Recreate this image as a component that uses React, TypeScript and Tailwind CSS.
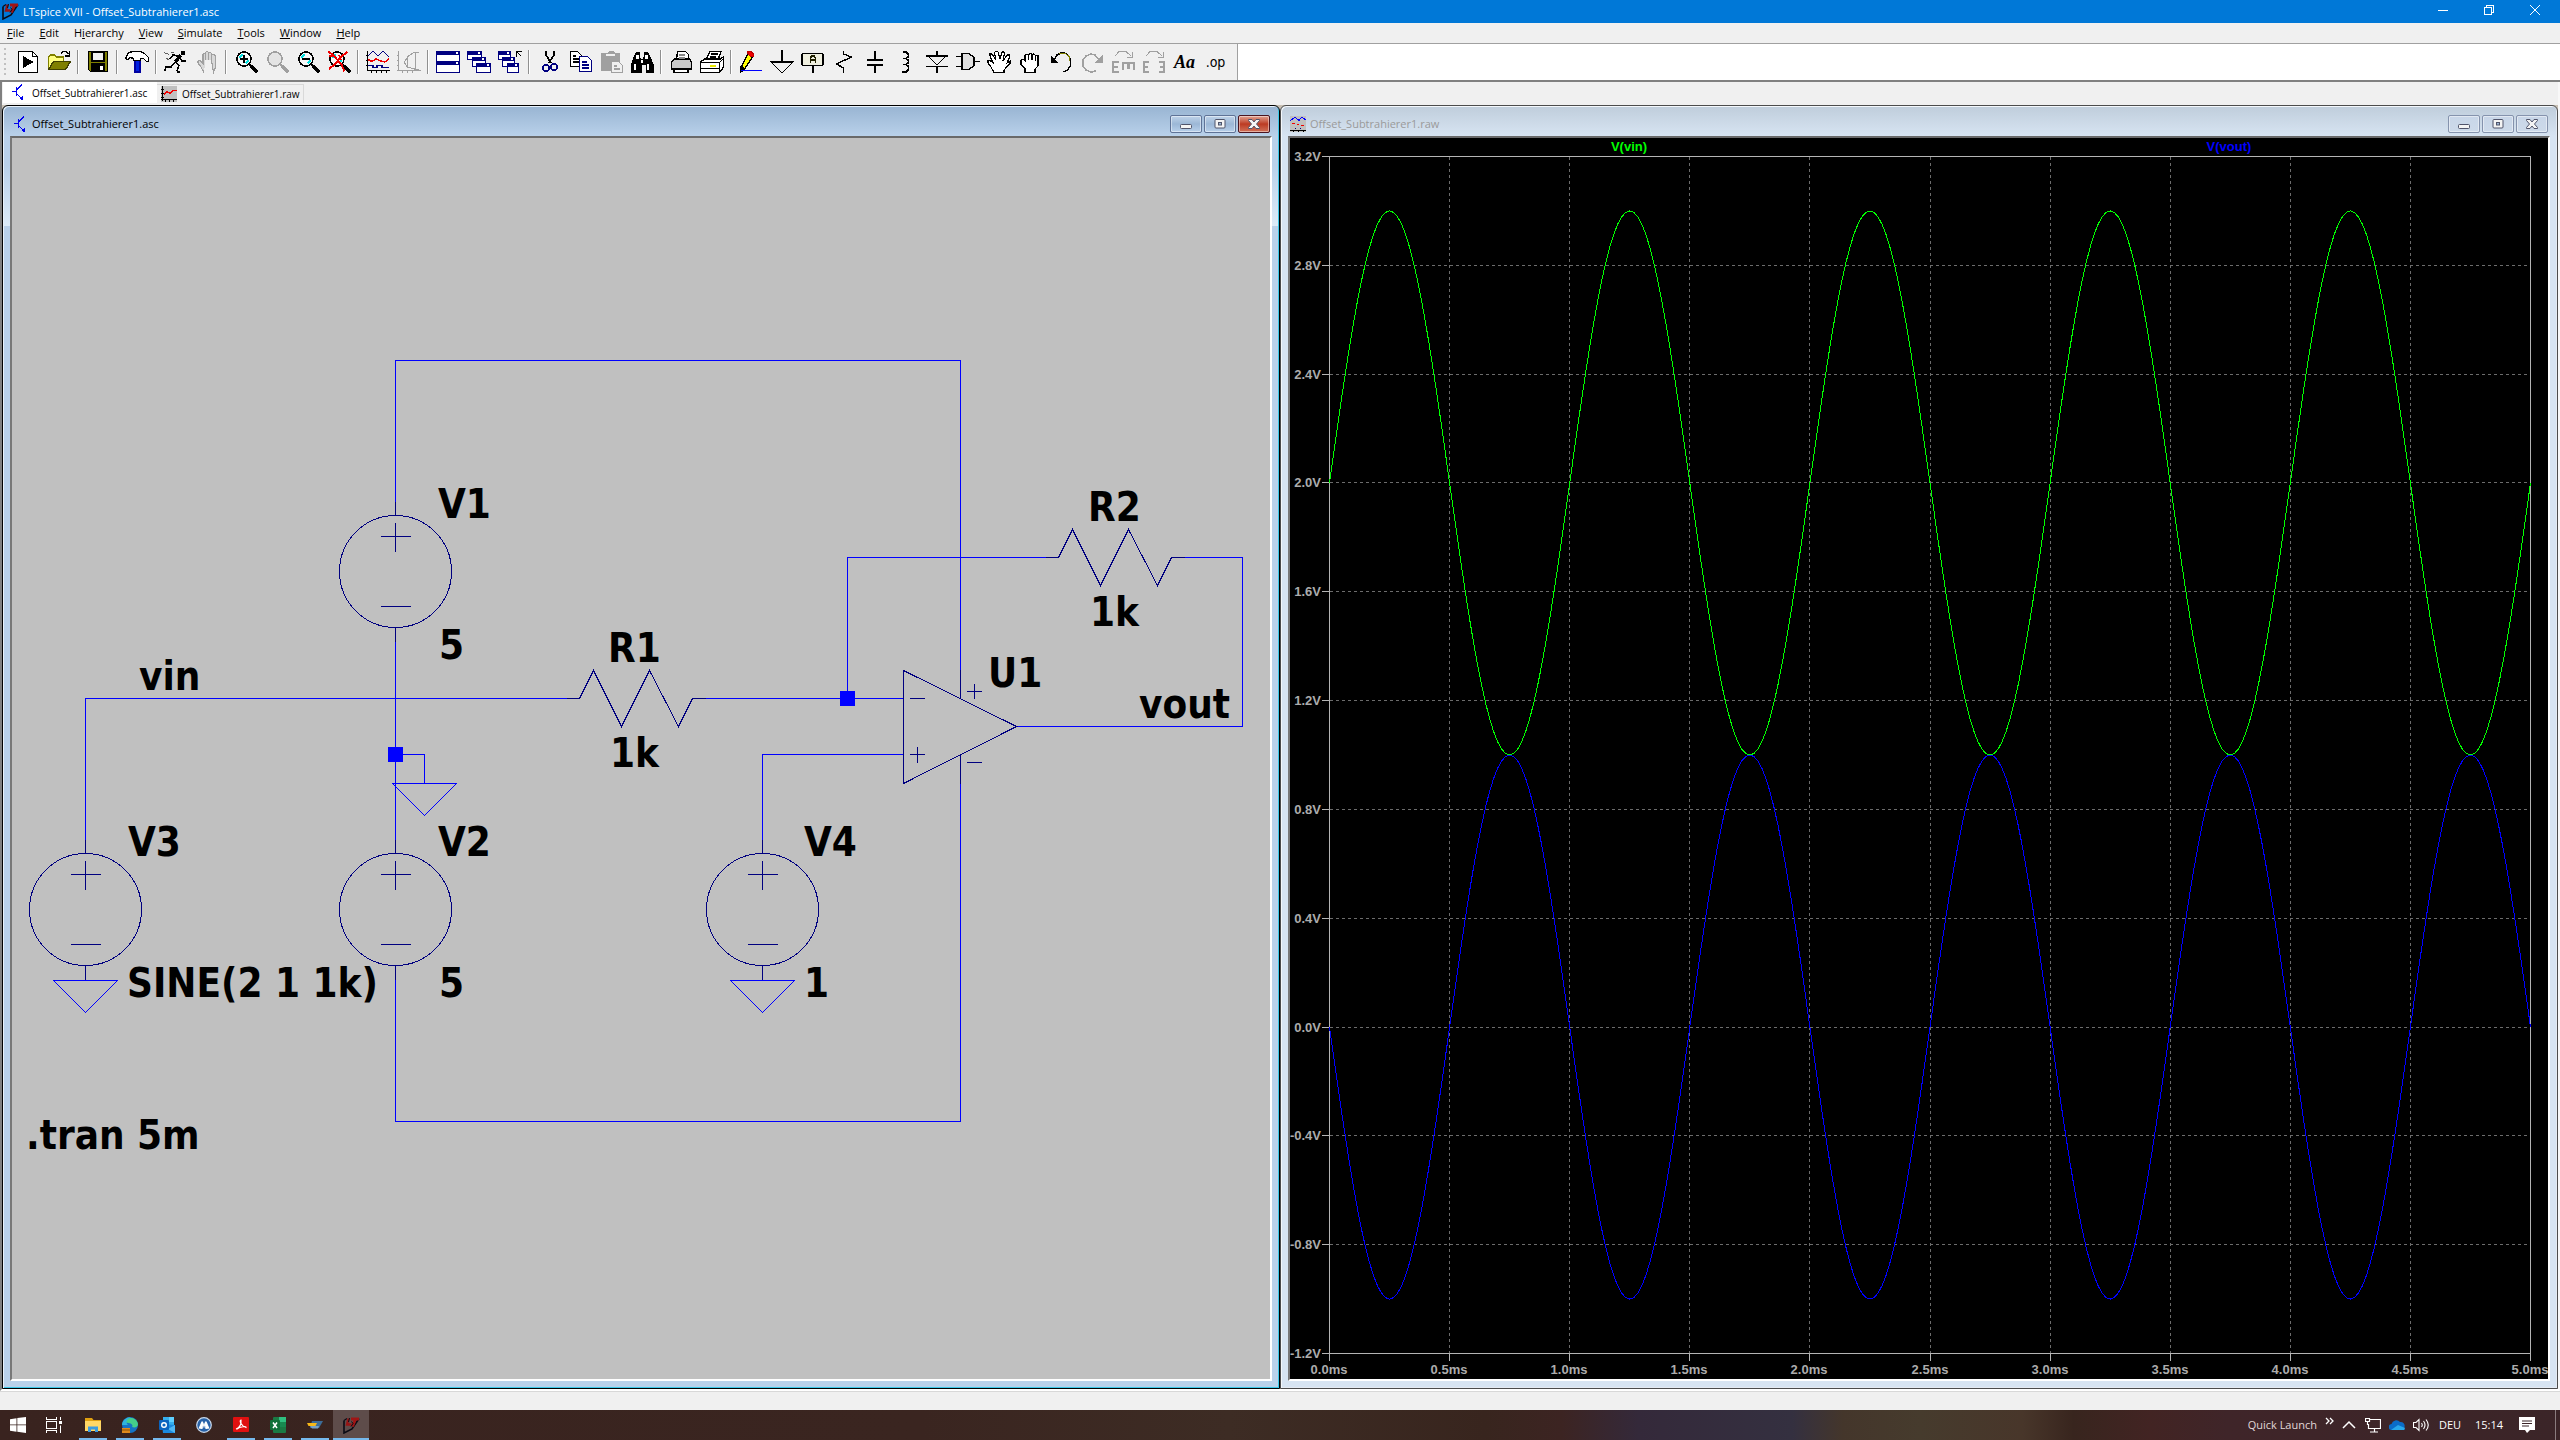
import React from "react";

type Kids = { children?: React.ReactNode };

const ui = "font-['Open_Sans','Noto_Sans',sans-serif]";

/* ---------- toolbar icons: 24 x 24, hard edged ---------- */

function Ico({ children }: Kids) {
  return (
    <svg viewBox="0 0 24 24" className="size-6 shrink-0" shapeRendering="crispEdges" fill="none" stroke="#000" strokeWidth="1.4" aria-hidden="true">
      {children}
    </svg>
  );
}

const grey = "#a0a0a0";
const navy = "#000080";

function Lens({ color = "#000", shine = true, children }: Kids & { color?: string; shine?: boolean }) {
  return (
    <Ico>
      <g transform="translate(1 0)">
        <circle cx="9" cy="9" r="7" fill={shine ? "#f8f8f8" : "#e4e4e4"} stroke={color} strokeWidth="1.6" />
        {shine && <path d="M4.500 8l3-3.500M10.500 13.500l3-3" stroke="#00e0e0" strokeWidth="2" />}
        <path d="M14 14l3 3" stroke={color} strokeWidth="2" />
        <path d="M16 16l6.500 6.500" stroke={color} strokeWidth="3.400" />
        {children}
      </g>
    </Ico>
  );
}

function MiniWin({ x, y, w, h }: { x: number; y: number; w: number; h: number }) {
  return (
    <g>
      <rect x={x + 0.5} y={y + 0.5} width={w - 1} height={h - 1} fill="#fff" stroke={navy} strokeWidth="1.2" />
      <rect x={x} y={y} width={w} height="4" fill={navy} stroke="none" />
      <rect x={x + w - 4} y={y + 1} width="2" height="2" fill="#fff" stroke="none" />
    </g>
  );
}

function TransistorIcon() {
  return (
    <svg viewBox="0 0 14 17" className="h-[17px] w-[14px] shrink-0" shapeRendering="crispEdges" fill="none" stroke="#0000f0" strokeWidth="1.4" aria-hidden="true">
      <path d="M0 7.500h4M4.500 3v9M5 5.500l5-5M5 10l5 5" />
      <path d="M11 16v-5l-4 4z" fill="#0000f0" stroke="none" />
    </svg>
  );
}

function WaveDocIcon({ blue = false }: { blue?: boolean }) {
  return (
    <svg viewBox="0 0 16 16" className="size-4 shrink-0" shapeRendering="crispEdges" fill="none" aria-hidden="true">
      <rect width="16" height="16" fill="#c0c0c0" />
      {blue ? (
        <>
          <path d="M0 4.500l2-1 3-2.500 4 3.500 3-3.500 4 3" stroke="#0000ff" strokeWidth="1" />
          <path d="M2 7.500h3M7 8.500h2M11 9.500h3" stroke="#f00000" strokeWidth="1" />
          <path d="M5 12h1M10 12h1" stroke={navy} strokeWidth="1" />
          <path d="M0 14.500h16M3.500 14v2M8.500 14v2M13.500 14v2" stroke="#000" strokeWidth="1" />
        </>
      ) : (
        <>
          <path d="M3 8.500l3-3 3 2 3-3h4" stroke="#f00000" strokeWidth="1.6" />
          <path d="M1.500 0v15M0 3.500h3M0 7.500h3M0 11.500h3M0 13.500h16M4.500 13v3M8.500 13v3M12.500 13v3" stroke="#000" strokeWidth="1.2" />
        </>
      )}
    </svg>
  );
}

function LtLogo() {
  return (
    <svg viewBox="0 0 17 17" className="size-[17px] shrink-0" fill="none" aria-hidden="true">
      <path d="M1 3.500v12.500L9 12l7-10.500" stroke="#0a0a14" strokeWidth="1.600" />
      <path d="M1 3.500l3-2" stroke="#0a0a14" strokeWidth="1.200" />
      <path d="M5.500 1.500L4 7.500h4.500" stroke="#981414" strokeWidth="2.400" />
      <path d="M8 2h8M12.500 2L9.500 9.500" stroke="#a01414" strokeWidth="2.800" />
      <path d="M8.500 4.500l1.500 2-2 3M6.500 1l-1 4" stroke="#0a0a14" strokeWidth="1" />
    </svg>
  );
}

const Hand = ({ c = "#000", f = "#fff" }: { c?: string; f?: string }) => (
  <path
    d="M9 22.500L6 17 3 13v-2l2-.5 3 3V4.500L9 3l1.500 1.500V10M10.500 10V2.500L12 1l1.500 1.500V10M13.500 10V2.500L15 2l1.500 1.500V10M16.500 10V5l1.500-1L20.500 5.500V17l-2 5.500z"
    fill={f}
    stroke={c}
    strokeWidth="1.2"
  />
);

type Tool = { label: string; icon: React.ReactNode };

const groups: Tool[][] = [
  [
    {
      label: "New Schematic",
      icon: (
        <Ico>
          <path d="M2.500 1.500h14l5 5v16h-19z" fill="#fff" />
          <path d="M16.500 1.500v5h5" />
          <path d="M7 6v12l10.500-6z" fill="#000" stroke="none" />
        </Ico>
      ),
    },
    {
      label: "Open",
      icon: (
        <Ico>
          <path d="M1.500 18.500V7l2-2h4l2 2h7v4" fill="#ffff80" stroke="#808000" />
          <path d="M1.500 19.500l5-8h17l-5 8z" fill="#808000" stroke="#404000" />
          <path d="M14 4l2-2.500h3l2.500 3M22.500 1v5h-5" />
        </Ico>
      ),
    },
  ],
  [
    {
      label: "Save",
      icon: (
        <Ico>
          <path d="M2.500 1.500h19v20h-17l-2-2z" fill="#808000" />
          <path d="M6 2h12v9H6z" fill="#f0f0f0" />
          <path d="M6 14h12v7.500H6z" fill="#000" />
          <path d="M14 16h3v4h-3z" fill="#fff" stroke="none" />
        </Ico>
      ),
    },
  ],
  [
    {
      label: "Control Panel",
      icon: (
        <Ico>
          <path d="M10 10h5v12h-5z" fill="#0020e0" stroke="#0000a0" />
          <path d="M.5 8l3-5 4-1.500h8l4 2 4 4v4h-2l-3-3h-3v2h-7v-2l-3-1-3 2z" fill="#fff" />
        </Ico>
      ),
    },
  ],
  [
    {
      label: "Run",
      icon: (
        <Ico>
          <path d="M17 1h4v3.500h-4z" fill="#000" stroke="none" />
          <path d="M16.500 5l-5 7" strokeWidth="3.400" />
          <path d="M14 6l-5-1-3 4M16 8l2 3h4M11 12l4 3.500-2 6M11 12l-4 5H2l-1.500 4M13 22h3" strokeWidth="1.600" />
          <path d="M0 2.500l5 2M2 8l3 2M7 2l3 1" stroke="#606060" strokeWidth="1" />
        </Ico>
      ),
    },
    { label: "Halt", icon: <Ico><Hand c={grey} f="#d8d8d8" /></Ico> },
  ],
  [
    { label: "Zoom In", icon: <Lens><path d="M9 5v8M5 9h8" strokeWidth="2" /></Lens> },
    { label: "Pan", icon: <Lens color={grey} shine={false} /> },
    { label: "Zoom Out", icon: <Lens><path d="M5 9h8" strokeWidth="2" /></Lens> },
    {
      label: "Zoom Full",
      icon: (
        <Lens>
          <path d="M.5 1.500l5 4 8 9 3 7M19.500 1.500l-7 6-6 7-5.500 4.500M1 6h5M11 5l2 5" stroke="#f00000" strokeWidth="2" />
        </Lens>
      ),
    },
  ],
  [
    {
      label: "Autorange",
      icon: (
        <Ico>
          <path d="M2 6l5-5 5 5 5-5 6 6" stroke={navy} />
          <path d="M2 9.500l4 2 4-2.500 5 2 4 1 4-3" stroke="#f00000" />
          <path d="M2 15.500h5v2h4v-2h5v2h7" stroke={navy} />
          <path d="M1.500 1v20M1.500 20.500H24M0 5.500h2M0 10.500h2M0 15.500h2M5.500 20v3M10.500 20v3M15.500 20v3M20.500 20v3" strokeWidth="1.2" />
        </Ico>
      ),
    },
    {
      label: "Plot Settings",
      icon: (
        <Ico>
          <path d="M21.500 2h-4L10 7v10l7.500 2h4M18 2v17M7 12l4-5M7 12l4 6M1.500 1v20M0 20.500h24M0 5.500h2M0 10.500h2M0 15.500h2M5.500 20v3M10.500 20v3M15.500 20v3" stroke={grey} strokeWidth="1" />
        </Ico>
      ),
    },
  ],
  [
    { label: "Tile", icon: <Ico><MiniWin x={0} y={1} w={24} h={11} /><MiniWin x={0} y={11} w={24} h={12} /></Ico> },
    { label: "Cascade", icon: <Ico><MiniWin x={0} y={1} w={15} h={9} /><MiniWin x={5} y={7} w={14} h={10} /><MiniWin x={9} y={13} w={15} h={10} /></Ico> },
    {
      label: "Close All",
      icon: (
        <Ico>
          <MiniWin x={0} y={1} w={13} h={9} /><MiniWin x={4} y={7} w={13} h={10} /><MiniWin x={9} y={13} w={12} h={10} />
          <path d="M18.500 7V1.500H24M18.500 1.500l5 5" />
        </Ico>
      ),
    },
  ],
  [
    {
      label: "Cut",
      icon: (
        <Ico>
          <path d="M9 1v4l5 8M17 1v4l-5 8" strokeWidth="1.6" />
          <circle cx="9" cy="18" r="3" stroke={navy} strokeWidth="1.600" />
          <circle cx="17" cy="17" r="3" stroke={navy} strokeWidth="1.600" />
        </Ico>
      ),
    },
    {
      label: "Copy",
      icon: (
        <Ico>
          <path d="M2.500 1.500h7l4 4v11h-11z" fill="#fff" />
          <path d="M5 6h3M5 9h6M5 12h6" />
          <path d="M11.500 6.500h8l4 4v11h-12z" fill="#fff" stroke={navy} />
          <path d="M14 12h5M14 15h7M14 18h7" stroke={navy} />
        </Ico>
      ),
    },
    {
      label: "Paste",
      icon: (
        <Ico>
          <path d="M2 3h6l2-2h4l2 2h5v18H2z" fill={grey} stroke="none" />
          <path d="M7 5h9" stroke="#f0f0f0" />
          <path d="M12.500 11.500h7l4 4v7h-11z" fill="#f0f0f0" stroke={grey} />
          <path d="M15 16h3M15 19h6" stroke={grey} />
        </Ico>
      ),
    },
    {
      label: "Find",
      icon: (
        <Ico>
          <path d="M4 6l2-4h4v4l1 3h2l1-3V2h4l2 4 4 9v8h-8v-8h-4v8H1v-8z" fill="#000" stroke="none" />
          <path d="M6 5h3v4H6zM15 5h3v4h-3zM4 14h2v6H4zM17 14h2v6h-2zM11 10h2v3h-2z" fill="#fff" stroke="none" />
        </Ico>
      ),
    },
  ],
  [
    {
      label: "Print Setup",
      icon: (
        <Ico>
          <path d="M7.500 10l1-8.500h8l3 3V10" fill="#fff" />
          <path d="M2.500 12l3-3h15l2 3v7h-20z" fill="#c8c8c8" />
          <path d="M5 19h14v3.500H5z" fill="#fff" />
          <path d="M10 5h6M10 8h6" stroke="#888" />
        </Ico>
      ),
    },
    {
      label: "Print",
      icon: (
        <Ico>
          <path d="M6 10l4-8.500h11L18 10" fill="#fff" />
          <path d="M.5 12l4-3h16l3-2v10l-4 5.500H.5z" fill="#fff" />
          <path d="M.5 12.500h19l4-4M.5 18.500h19M19.500 13v9M11 4h7M10 7h6" />
          <path d="M10 15.500h6" stroke="#e8e800" strokeWidth="2" />
        </Ico>
      ),
    },
  ],
  [
    {
      label: "Draw Wire",
      icon: (
        <Ico>
          <path d="M3 21V16L9 3.500h5v3L6 18.500z" fill="#ffff00" />
          <path d="M9 1.500h3l2.500 2v3h-3L9 4z" fill="#f00000" stroke="#c00000" />
          <path d="M2 22v-5l4 2z" fill="#000" />
          <path d="M2 20.500h21" stroke="#0000ff" />
        </Ico>
      ),
    },
    { label: "Ground", icon: <Ico><path d="M12 0v12M1 12h22L12.500 22.500h-1z" strokeWidth="1.4" /></Ico> },
    {
      label: "Label Net",
      icon: (
        <Ico>
          <rect x="1" y="3.500" width="21" height="12" rx="2" fill="#f0f0e0" strokeWidth="1.6" />
          <path d="M9.500 13V8l1.500-2h2l1.500 2v5M9.500 10h5" stroke="#202000" strokeWidth="1.8" />
          <path d="M12 16v7" />
        </Ico>
      ),
    },
    { label: "Resistor", icon: <Ico><path d="M11.500 1v3l8 3L4.500 14l7 4v5" /></Ico> },
    { label: "Capacitor", icon: <Ico><path d="M12 1v9M12 15v8" /><path d="M4 10h16M4 15h16" strokeWidth="2.400" /></Ico> },
    { label: "Inductor", icon: <Ico><path d="M9 2h3l2.500 2.500v2L12 8.500h-3M12 8.500l2.500 2v2L12 14.500h-3M12 14.500l2.500 2v3L12 22H8" strokeWidth="1.600" /></Ico> },
    { label: "Diode", icon: <Ico><path d="M12 1v5M1 6h22M3 6l9 9 9-9M1 16.500h22M12 16v7" strokeWidth="1.400" /></Ico> },
    { label: "Component", icon: <Ico><path d="M6 3.500h7l5 4v8l-5 4H6zM0 6.500h6M0 16.500h6M18 11.500h6" fill="#e0e0e0" strokeWidth="1.400" /></Ico> },
    {
      label: "Move",
      icon: (
        <Ico>
          <path d="M7 22.500L4 17l-3-4v-2.500h2l3 2L3 6V4h2l4 6L7.500 2.500 9 1l2 1 2 7 2-7h2l.5 1.500L16 11l4-6h2.500v2L20 13l3-2v2.500L17 20v2.500z" fill="#fff" strokeWidth="1.200" />
        </Ico>
      ),
    },
    {
      label: "Drag",
      icon: (
        <Ico>
          <path d="M7 22.500v-4l-4-4V10l2-1 2 2V5l2-1 1.500 1L12 3l2 1.500L16 4l1.500 1.500L20 5.500V16l-3 3v3.500z" fill="#fff" strokeWidth="1.200" />
          <path d="M10.500 5v5M14 5v5M17.500 6v5" strokeWidth="1.200" />
        </Ico>
      ),
    },
    {
      label: "Undo",
      icon: (
        <Ico>
          <path d="M5 10l3-5 4-2h4l4 3 1.500 4v6l-3 4-4 2" strokeWidth="1.400" />
          <path d="M10 4l3-1h3l4 3.500 1 4" stroke="#808000" strokeWidth="1" />
          <path d="M2 6v7h7z" fill="#000" stroke="none" />
        </Ico>
      ),
    },
    {
      label: "Redo",
      icon: (
        <Ico>
          <path d="M18 9l-3-4-4-1-5 2-3 4v6l3 4 5 2 5-1" stroke={grey} strokeWidth="1.600" />
          <path d="M22.500 5v8h-8z" fill={grey} stroke="none" />
        </Ico>
      ),
    },
    {
      label: "Rotate",
      icon: (
        <Ico>
          <path d="M4 6l4-4.500h7l5 4.500M21 2v5h-5" stroke={grey} strokeWidth="1" />
          <path d="M8 12H2v10h6M2 17h5M12 20v-7h11v7M17.500 13v6" stroke={grey} strokeWidth="2.400" />
        </Ico>
      ),
    },
    {
      label: "Mirror",
      icon: (
        <Ico>
          <path d="M4 6l4-4.500h7l5 4.500M21 2v5h-5" stroke={grey} strokeWidth="1" />
          <path d="M7 12H2v10h5M2 17h4M17 12h5v10h-5M18 17h4" stroke={grey} strokeWidth="2.400" />
        </Ico>
      ),
    },
    { label: "Text", icon: <span className="font-['Liberation_Serif',serif] text-[18px] leading-6 font-bold italic">Aa</span> },
    { label: "SPICE Directive", icon: <span className="font-['DejaVu_Sans_Condensed','DejaVu_Sans',sans-serif] text-[14px] leading-6">.op</span> },
  ],
];

/* ---------- schematic ---------- */

const wire = "#0000ff";
const part = "#000080";

function Source({ x, y }: { x: number; y: number }) {
  return (
    <g stroke={part}>
      <circle cx={x} cy={y} r="56" />
      <path d={`M${x} ${y - 70}v14M${x - 15} ${y - 35}h30M${x} ${y - 49}v29M${x - 15} ${y + 35}h30M${x} ${y + 56}v14`} />
    </g>
  );
}

function Ground({ x, y }: { x: number; y: number }) {
  return <path stroke={wire} d={`M${x - 32} ${y}h64l-32 32z`} />;
}

function Resistor({ x, y }: { x: number; y: number }) {
  return <path stroke={part} d={`M${x} ${y}h13l14-28 28 56 28-56 29 56 14-28h13`} />;
}

const schematicTexts: [number, number, string][] = [
  [438, 518, "V1"], [439, 659, "5"], [139, 690, "vin"], [128, 856, "V3"], [438, 856, "V2"],
  [127, 997, "SINE(2 1 1k)"], [439, 997, "5"], [26, 1149, ".tran 5m"], [608, 662, "R1"],
  [610, 767, "1k"], [1088, 521, "R2"], [1090, 626, "1k"], [988, 687, "U1"], [1139, 718, "vout"],
  [804, 856, "V4"], [804, 997, "1"],
];

function Schematic() {
  return (
    <svg viewBox="12 138 1258 1241" preserveAspectRatio="xMidYMin meet" className="block size-full bg-[#c0c0c0]" role="img" aria-label="Schematic">
      <g fill="none" strokeWidth="1" shapeRendering="crispEdges">
        <path
          stroke={wire}
          d="M395.500 502V360.500H960.500V671M395.500 642V840M395.500 980V1121.500H960.500V783M85.500 840V698.500H567M706 698.500H904M847.500 698.500V557.500H1046M1184 557.500H1242.500V726.500H1016M762.500 840V754.500H904M395.500 754.500H424.500V783.500"
        />
        <Source x={395.5} y={571.5} />
        <Source x={395.5} y={909.5} />
        <Source x={85.5} y={909.5} />
        <Source x={762.5} y={909.5} />
        <Ground x={424.5} y={783.5} />
        <Ground x={85.5} y={980.5} />
        <Ground x={762.5} y={980.5} />
        <Resistor x={566.5} y={698.5} />
        <Resistor x={1045.500} y={557.5} />
        <path
          stroke={part}
          d="M903.500 670.500V783.500L1016.500 726.500zM960.500 670V698.500M960.500 754.500V784M910 698.500h15M910 754.500h15M917.500 747v16M967 691.500h15M974.500 684v15M967 762.500h15"
        />
      </g>
      <rect x="388" y="747" width="15" height="15" fill={wire} />
      <rect x="840" y="691" width="15" height="15" fill={wire} />
      <g className="font-['DejaVu_Sans_Condensed','DejaVu_Sans',sans-serif] text-[40px] font-bold">
        {schematicTexts.map(([x, y, t]) => (
          <text key={`${x}-${y}`} x={x} y={y}>{t}</text>
        ))}
      </g>
    </svg>
  );
}

/* ---------- waveform plot ---------- */

const X0 = 1329.5, X1 = 2530.5, Y0 = 156.5, Y1 = 1353.5;
const px = (ms: number) => X0 + (ms / 5) * (X1 - X0);
const py = (v: number) => Y0 + ((3.2 - v) / 4.4) * (Y1 - Y0);

function trace(f: (ms: number) => number) {
  const pts: string[] = [];
  for (let i = 0; i <= 300; i++) {
    const t = i / 60;
    pts.push(`${px(t).toFixed(1)},${py(f(t)).toFixed(1)}`);
  }
  return pts.join(" ");
}

const vin = trace((t) => 2 + Math.sin(2 * Math.PI * t));
const vout = trace((t) => -Math.sin(2 * Math.PI * t));
const volts = Array.from({ length: 12 }, (_, i) => (32 - 4 * i) / 10);
const times = Array.from({ length: 11 }, (_, i) => i / 2);

function Plot() {
  return (
    <svg viewBox="1290 138 1258 1241" preserveAspectRatio="xMidYMin meet" className="block size-full bg-black" role="img" aria-label="Waveforms">
      <g fill="none" strokeWidth="1" shapeRendering="crispEdges">
        <g stroke="#6c6c6c" strokeDasharray="3 3">
          {volts.slice(1, 11).map((v) => (
            <path key={v} d={`M${X0} ${Math.floor(py(v)) + 0.5}H${X1}`} />
          ))}
          {times.slice(1, 10).map((t) => (
            <path key={t} d={`M${Math.floor(px(t)) + 0.5} ${Y0}V${Y1}`} />
          ))}
        </g>
        <g stroke="#b4b4b4">
          <rect x={X0} y={Y0} width={X1 - X0} height={Y1 - Y0} />
          {volts.map((v) => (
            <path key={v} d={`M${X0 - 7.5} ${Math.floor(py(v)) + 0.5}H${X0}`} />
          ))}
          {times.map((t) => (
            <path key={t} d={`M${Math.floor(px(t)) + 0.5} ${Y1}v7.500`} />
          ))}
        </g>
        <polyline points={vout} stroke="#0000ff" />
        <polyline points={vin} stroke="#00ff00" />
      </g>
      <g className="font-['Liberation_Sans',Arial,sans-serif] text-[13px] font-bold" fill="#acacac">
        {volts.map((v) => (
          <text key={v} x="1321" y={Math.floor(py(v)) + 5} textAnchor="end">{`${v.toFixed(1)}V`}</text>
        ))}
        {times.map((t) => (
          <text key={t} x={Math.floor(px(t))} y="1374" textAnchor="middle">{`${t.toFixed(1)}ms`}</text>
        ))}
        <text x="1629" y="151" textAnchor="middle" fill="#00ff00">V(vin)</text>
        <text x="2229" y="151" textAnchor="middle" fill="#0000ff">V(vout)</text>
      </g>
    </svg>
  );
}

/* ---------- child windows ---------- */

function CaptionButton({ kind, active }: { kind: "Minimize" | "Maximize" | "Close"; active: boolean }) {
  const skin = !active
    ? "border-[#8593ad] bg-linear-to-b from-[#c8d6e8] to-[#cddaea]"
    : kind === "Close"
      ? "border-[#4a1420] bg-linear-to-b from-[#e0a090] via-[#bc3a22] to-[#d07058]"
      : "border-[#5f7397] bg-linear-to-b from-[#bfd3ea] via-[#9cb7d6] to-[#b8d0ea]";
  return (
    <button aria-label={kind} className={`flex h-[18px] w-8 items-center justify-center rounded-xs border shadow-[inset_0_0_0_1px_rgba(255,255,255,0.45)] ${skin}`}>
      <svg viewBox="0 0 12 12" className="size-3" fill="#f4f4f4" stroke="#50546a" strokeWidth="1" aria-hidden="true">
        {kind === "Minimize" && <rect x=".5" y="6.500" width="11" height="4" rx="1" />}
        {kind === "Maximize" && (
          <>
            <rect x="1" y="1.500" width="10" height="8.500" rx="1" />
            <rect x="4.500" y="4.500" width="3" height="2.500" fill="#9cb7d6" />
          </>
        )}
        {kind === "Close" && <path d="M.5 1.500h3.500L6 4l2-2.500h3.500v1L8.500 6l3 3.500v1H8L6 8l-2 2.500H.5v-1l3-3.500-3-3.500z" />}
      </svg>
    </button>
  );
}

function ChildWindow({ title, icon, active, children }: Kids & { title: string; icon: React.ReactNode; active: boolean }) {
  const frame = active
    ? "border-black bg-[linear-gradient(to_bottom,#98b4d2_0,#b9d1ea_30px,#b9d1ea_60px,#dcebf8_120px,#b9d1ea_120px)] shadow-[inset_1px_1px_0_#e8f2fb,inset_-1px_-1px_0_#3cc8e8]"
    : "border-[#4c4c4c] bg-[linear-gradient(to_bottom,#bfcddb_0,#d7e4f2_30px)] shadow-[inset_1px_1px_0_#f4f8fc,inset_-1px_-1px_0_#e4eaf2]";
  return (
    <section className={`flex min-w-0 flex-col rounded-t-md border px-[7px] pb-[7px] ${frame}`}>
      <header className={`flex h-[30px] shrink-0 items-center gap-1 pt-1.5 ${active ? "pl-1" : "pl-0.5"}`}>
        {icon}
        <h2 className={`grow ${active ? "text-black" : "text-[#9a9a9a]"}`}>{title}</h2>
        <div className="flex gap-0.5 pr-0.5">
          <CaptionButton kind="Minimize" active={active} />
          <CaptionButton kind="Maximize" active={active} />
          <CaptionButton kind="Close" active={active} />
        </div>
      </header>
      <div className="min-h-0 grow border-2 border-t-[#696969] border-r-white border-b-white border-l-[#787878]">{children}</div>
    </section>
  );
}

/* ---------- taskbar ---------- */

function TIcon({ children }: Kids) {
  return (
    <svg viewBox="0 0 16 16" className="size-4 shrink-0" fill="none" aria-hidden="true">
      {children}
    </svg>
  );
}

const apps: { label: string; open: boolean; icon: React.ReactNode }[] = [
  {
    label: "File Explorer", open: true,
    icon: (
      <TIcon>
        <path d="M0 1h7l1.500 2H16v4H0z" fill="#e0a010" />
        <path d="M0 4h16v10H0z" fill="#ffd766" />
        <path d="M3 15V9.500h10V15h-3v-2.500H6V15z" fill="#3b9be0" />
      </TIcon>
    ),
  },
  {
    label: "Edge", open: true,
    icon: (
      <TIcon>
        <circle cx="8" cy="8" r="8" fill="#1574c4" />
        <path d="M1 6C3 0 14-1.500 16 7c0 3-3 4-6 3 2-3-3-5-9-4z" fill="#45d08a" />
        <path d="M0 8C0 3 5 0 9 0 5 2 3 5 6 8z" fill="#2fb4dc" />
        <path d="M0 11h8v5H0z" fill="#e08a1c" /><path d="M0 13h8" stroke="#8a5208" />
      </TIcon>
    ),
  },
  {
    label: "Outlook", open: true,
    icon: (
      <TIcon>
        <path d="M4 0h11v8H4z" fill="#35b0f0" /><path d="M10 0h5v5h-5z" fill="#5fd0ff" />
        <path d="M3 7l13 1v8H4z" fill="#1a8ae0" /><path d="M9 12l7-4v8z" fill="#50b8f4" />
        <rect y="3" width="10" height="10" rx="1" fill="#0a64c0" />
        <circle cx="5" cy="8" r="2.300" stroke="#fff" strokeWidth="1.400" />
      </TIcon>
    ),
  },
  {
    label: "Messenger", open: false,
    icon: (
      <TIcon>
        <circle cx="8" cy="8" r="7.300" fill="#2862a8" stroke="#c8d8ec" strokeWidth="1.200" />
        <path d="M2.500 11.500l3-7 1.500 0 .5 2.500-1.500 5zM13.500 11.500l-3-7-1.500 0-.5 2.500 1.500 5z" fill="#fff" />
        <path d="M6.500 11.500l1.500-5 1.500 5" stroke="#fff" />
      </TIcon>
    ),
  },
  {
    label: "Acrobat", open: true,
    icon: (
      <TIcon>
        <rect width="16" height="15" rx="1" fill="#e01010" />
        <path d="M3 12c3-1 5.500-4 5-9-2 0 0 6 5 7.500 1-1.500-6-1-9 1.500" stroke="#fff" strokeWidth="1.200" />
      </TIcon>
    ),
  },
  {
    label: "Excel", open: true,
    icon: (
      <TIcon>
        <rect x="3" width="13" height="16" rx="1" fill="#1a7a44" /><path d="M9 0h7v5H9z" fill="#30c080" /><path d="M9 5h7v5H9z" fill="#188a50" />
        <rect y="3" width="10" height="10" rx="1" fill="#107038" />
        <path d="M3 5.500l4 5.500M7 5.500L3 11" stroke="#fff" strokeWidth="1.500" />
      </TIcon>
    ),
  },
  {
    label: "Editor", open: true,
    icon: (
      <TIcon>
        <path d="M5 4h11l-4 7H3z" fill="#3c6c98" /><path d="M0 6h10l-1.500 3H1.500z" fill="#f8b818" /><path d="M3 9h9l-1 2.500H5z" fill="#78a0c4" />
      </TIcon>
    ),
  },
];

function Taskbar() {
  return (
    <footer className="flex h-[30px] shrink-0 items-stretch bg-[linear-gradient(to_right,#39231f_0%,#3a2520_36%,#3d2c24_48%,#38251e_58%,#3c2422_61%,#34293a_64%,#343040_70%,#44362b_72%,#463b2d_75%,#48362a_79%,#38251e_81%,#422423_84%,#3f2529_87%,#3b2528_100%)] text-white">
      <button aria-label="Start" className="flex w-9 items-center justify-center">
        <TIcon><path d="M0 2.200l6.500-1v6.300H0zM7.300 1.100L16 0v7.500H7.300zM0 8.300h6.500v6.400L0 13.800zM7.300 8.300H16V16l-8.700-1.200z" fill="#fff" /></TIcon>
      </button>
      <button aria-label="Task View" className="mr-0.5 flex w-9 items-center justify-center">
        <TIcon>
          <path d="M.5 4.500h10v7H.5zM.5 0v2M10.500 0v2M0 2.500h11M.5 16v-2M10.500 16v-2M0 13.500h11" stroke="#fff" shapeRendering="crispEdges" />
          <path d="M14.500 0v3M14.500 8.500V16" stroke="#fff" /><path d="M13 4h3v3h-3z" fill="#fff" />
        </TIcon>
      </button>
      {apps.map((a) => (
        <button key={a.label} aria-label={a.label} className={`flex w-[37px] items-center justify-center bg-[length:28px_2px] bg-bottom bg-no-repeat ${a.open ? "bg-[linear-gradient(#76b9ed,#76b9ed)]" : ""}`}>
          {a.icon}
        </button>
      ))}
      <button aria-label="LTspice" className="flex w-9 items-center justify-center border-b-2 border-[#76b9ed] bg-[#5e4c4a] pt-0.5">
        <LtLogo />
      </button>
      <div className="ml-auto flex items-center">
        <span className="text-[#e0d8d8]">Quick Launch</span>
        <button aria-label="More" className="ml-2 flex h-4 w-3 items-start">
          <svg viewBox="0 0 10 8" className="h-2 w-2.5" fill="none" stroke="#fff" strokeWidth="1.300" aria-hidden="true"><path d="M1 1l3 3-3 3M5 1l3 3-3 3" /></svg>
        </button>
        <button aria-label="Show hidden icons" className="ml-1"><TIcon><path d="M2 11l6-6 6 6" stroke="#fff" strokeWidth="1.500" /></TIcon></button>
        <button aria-label="Network" className="ml-2">
          <TIcon><path d="M5 2.500h10.500v9H3.500V7M.5 1.500h4v3h-4zM2.500 5v3M9.500 12v3M5 15h8" stroke="#fff" strokeWidth="1.200" /></TIcon>
        </button>
        <button aria-label="OneDrive" className="ml-2">
          <TIcon><path d="M3 13a3 3 0 01-.5-6A5 5 0 0111 5a4 4 0 014.500 5v3z" fill="#0a6cc8" /><path d="M2 13l7-5 7 3-1 2z" fill="#28a8ea" /></TIcon>
        </button>
        <button aria-label="Volume" className="ml-2">
          <TIcon><path d="M.5 5.500H3l3-3v11l-3-3H.500zM8.500 6q1.500 2 0 4M10.500 4q3 4 0 8M13 2.500q4.500 5.500 0 11" stroke="#fff" strokeWidth="1.100" /></TIcon>
        </button>
        <span className="ml-[10px] w-9">DEU</span>
        <time className="w-11">15:14</time>
        <button aria-label="Notifications" className="mr-5">
          <TIcon><path d="M0 0h16v13h-5l-3 3-2-3H0z" fill="#fff" /><path d="M3 4h10M3 6.500h10M3 9h7" stroke="#3b2528" strokeWidth="1.200" /></TIcon>
        </button>
        <div className="mr-1 h-[30px] w-px bg-[#8a7c7e]" />
      </div>
    </footer>
  );
}

/* ---------- application ---------- */

const menus: [string, string, string][] = [
  ["", "F", "ile"], ["", "E", "dit"], ["H", "i", "erarchy"], ["", "V", "iew"],
  ["", "S", "imulate"], ["", "T", "ools"], ["", "W", "indow"], ["", "H", "elp"],
];

export default function App() {
  return (
    <div className={`flex h-screen flex-col overflow-hidden bg-[#f0f0f0] text-[11px] leading-4 text-black ${ui}`}>
      <header className="flex h-[23px] shrink-0 items-center bg-[#0078d7] pr-0.5 pl-0.5 text-white">
        <LtLogo />
        <h1 className="ml-1 grow">LTspice XVII - Offset_Subtrahierer1.asc</h1>
        <button aria-label="Minimize" className="flex w-[46px] justify-center pb-1">
          <svg viewBox="0 0 10 10" className="size-2.5" shapeRendering="crispEdges" fill="none" stroke="#fff" aria-hidden="true"><path d="M0 5.500h10" /></svg>
        </button>
        <button aria-label="Restore" className="flex w-[46px] justify-center pb-1">
          <svg viewBox="0 0 10 10" className="size-2.5" shapeRendering="crispEdges" fill="none" stroke="#fff" aria-hidden="true"><path d="M.5 2.500h7v7h-7zM2.500 2V.5h7v7H8" /></svg>
        </button>
        <button aria-label="Close" className="flex w-[46px] justify-center pb-1">
          <svg viewBox="0 0 10 10" className="size-2.5" fill="none" stroke="#fff" aria-hidden="true"><path d="M0 0l10 10M10 0L0 10" /></svg>
        </button>
      </header>

      <nav className="flex h-[21px] shrink-0 items-center gap-[15px] border-b border-[#a0a0a0] pl-[7px]">
        {menus.map(([a, u, b]) => (
          <button key={u + b}>{a}<span className="underline">{u}</span>{b}</button>
        ))}
      </nav>

      <div className="flex h-[38px] shrink-0 border-b-2 border-[#808080] bg-white">
        <div className="flex items-center border-r border-[#a0a0a0] bg-[#f0f0f0] pr-[6px]" role="toolbar">
          <div className="mr-[6px] ml-1 h-[28px] w-0.5 bg-[repeating-linear-gradient(to_bottom,#c0c0c0_0_2px,transparent_2px_5px)]" />
          {groups.map((g, i) => (
            <React.Fragment key={i}>
              {i > 0 && <div className="mx-[3px] h-6 w-0.5 border-r border-l border-r-white border-l-[#909090]" />}
              {g.map((t) => (
                <button key={t.label} aria-label={t.label} className="flex h-9 w-[31px] items-center justify-center">{t.icon}</button>
              ))}
            </React.Fragment>
          ))}
        </div>
      </div>

      <main className="flex min-h-0 grow flex-col border-r-2 border-b-2 border-l-2 border-r-[#f8f8f8] border-b-white border-l-[#808080]">
        <div className="flex h-[23px] shrink-0 items-start pl-px text-[10px]" role="tablist">
          <button role="tab" aria-selected="true" className="flex h-[21px] w-[154px] items-center gap-1.5 bg-white pl-[9px]">
            <TransistorIcon />
            <span>Offset_Subtrahierer1.asc</span>
          </button>
          <button role="tab" aria-selected="false" className="mt-0.5 flex h-[19px] w-[147px] items-center gap-[5px] border-t border-r border-[#d9d9d9] pl-1">
            <WaveDocIcon />
            <span>Offset_Subtrahierer1.raw</span>
          </button>
        </div>
        <div className="grid min-h-0 grow grid-cols-2 bg-[#c8c0b4]">
          <ChildWindow title="Offset_Subtrahierer1.asc" icon={<TransistorIcon />} active>
            <Schematic />
          </ChildWindow>
          <ChildWindow title="Offset_Subtrahierer1.raw" icon={<WaveDocIcon blue />} active={false}>
            <Plot />
          </ChildWindow>
        </div>
      </main>

      <div className="h-[19px] shrink-0 border-t border-[#d8d8d8]" role="status" />
      <Taskbar />
    </div>
  );
}
